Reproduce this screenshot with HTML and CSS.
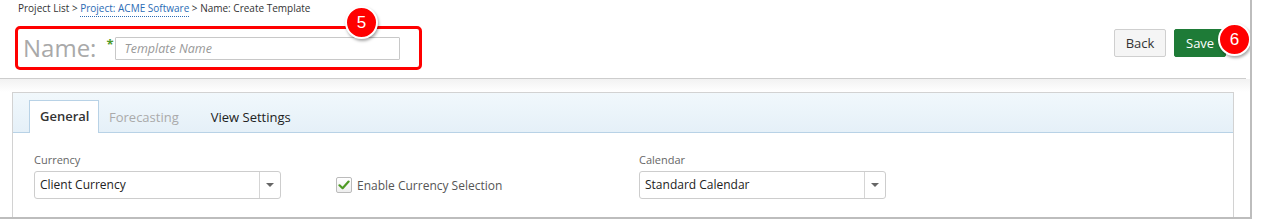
FILE: index.html
```html
<!DOCTYPE html>
<html>
<head>
<meta charset="utf-8">
<link rel="stylesheet" href="styles.css">
</head>
<body>
<div class="frame">
  <header class="top">
    <div class="crumbs">Project List &gt; <a class="crumb-link">Project: ACME Software</a> &gt; Name: Create Template</div>
    <div class="titlebar">
      <div class="name-box">
        <span class="name-label">Name:</span>
        <span class="req">*</span>
        <input class="name-input" type="text" placeholder="Template Name">
        <span class="badge badge-5">5</span>
      </div>
      <div class="actions">
        <button class="btn btn-back">Back</button>
        <button class="btn btn-save">Save<span class="badge badge-6">6</span></button>
      </div>
    </div>
  </header>
  <div class="content">
    <section class="panel">
      <nav class="tabs">
        <span class="tab tab-active">General</span>
        <span class="tab tab-disabled">Forecasting</span>
        <span class="tab tab-view">View Settings</span>
      </nav>
      <div class="panel-body">
        <div class="field">
          <div class="field-label">Currency</div>
          <div class="select">
            <span class="select-text">Client Currency</span>
            <span class="select-arrow"><span class="caret"></span></span>
          </div>
        </div>
        <label class="check">
          <span class="check-box">
            <svg width="12" height="12" viewBox="0 0 12 12"><path d="M1.5 6.3 L4.6 9.2 L10.6 2.6" fill="none" stroke="#4e9a24" stroke-width="2.2" stroke-linecap="round" stroke-linejoin="round"/></svg>
          </span>
          <span class="check-text">Enable Currency Selection</span>
        </label>
        <div class="field">
          <div class="field-label">Calendar</div>
          <div class="select">
            <span class="select-text">Standard Calendar</span>
            <span class="select-arrow"><span class="caret"></span></span>
          </div>
        </div>
      </div>
    </section>
  </div>
</div>
</body>
</html>
```
FILE: styles.css
```css
* { box-sizing: border-box; }
body {
  margin: 0;
  font-family: "Open Sans", "Liberation Sans", sans-serif;
  color: #333;
  background: #fff;
}
.frame {
  width: 1252px;
  height: 219px;
  border-right: 2px solid #bdbdbd;
  border-bottom: 2px solid #bdbdbd;
  overflow: hidden;
}
.top {
  height: 79px;
  margin-right: 4px;
  border-bottom: 1px solid #cdcdcd;
}
.crumbs {
  height: 26px;
  padding: 1px 0 0 18px;
  font-size: 10px;
  line-height: 14px;
  color: #333;
}
.crumb-link {
  color: #2b6cb5;
  text-decoration: none;
  border-bottom: 1px dotted #2b6cb5;
  padding-bottom: 1px;
}
.titlebar {
  display: flex;
  justify-content: space-between;
  align-items: flex-start;
  padding: 0 20px 0 15px;
}
.name-box {
  position: relative;
  width: 407px;
  height: 44px;
  border: 3px solid #f00;
  border-radius: 5px;
  display: flex;
  align-items: center;
  padding-left: 5px;
}
.name-label {
  font-size: 24px;
  line-height: 1;
  color: #a9a9a9;
}
.req {
  align-self: flex-start;
  margin: 9px 0 0 10px;
  font-size: 13px;
  font-weight: 700;
  line-height: 13px;
  color: #4c9a2a;
}
.name-input {
  margin-left: 1px;
  width: 285px;
  height: 23px;
  border: 1px solid #c8c8c8;
  border-radius: 1px;
  padding: 0 9px;
  font-family: "Open Sans", "Liberation Sans", sans-serif;
  font-style: italic;
  font-size: 12.5px;
  color: #333;
  outline: none;
}
.name-input::placeholder { color: #999; }
.badge {
  position: absolute;
  width: 33px;
  height: 33px;
  border-radius: 50%;
  background: #f00;
  border: 2px solid #fff;
  box-shadow: 1px 2px 3px rgba(0, 0, 0, 0.35);
  color: #fff;
  font-family: "Liberation Sans", Arial, sans-serif;
  font-size: 17px;
  display: flex;
  align-items: center;
  justify-content: center;
}
.badge-5 { left: 327px; top: -23px; }
.badge-6 { left: 43px; top: -7px; }
.actions {
  display: flex;
  gap: 8px;
  margin-top: 3px;
}
.btn {
  height: 28px;
  width: 52px;
  padding: 0;
  font-family: "Open Sans", "Liberation Sans", sans-serif;
  font-size: 13px;
  border-radius: 2px;
  border: 1px solid #cfcfcf;
  background: #f5f5f5;
  color: #333;
}
.btn-save {
  position: relative;
  background: #1e7b37;
  border-color: #1e7b37;
  color: #fff;
  text-align: left;
  padding-left: 11px;
}
.content {
  height: 138px;
  padding: 13px 0 0 12px;
  background: linear-gradient(#f2f2f2, #fff 13px);
}
.panel {
  width: 1222px;
  height: 130px;
  border: 1px solid #d2d2d2;
  border-bottom: none;
  background: #fff;
}
.tabs {
  height: 40px;
  display: flex;
  align-items: flex-end;
  padding-left: 16px;
  background: linear-gradient(#f1f8fc, #e5f0f8);
  border-bottom: 1px solid #b8d2e6;
}
.tab {
  height: 32px;
  line-height: 31px;
  padding: 0 10px;
  font-size: 13px;
  margin-bottom: -1px;
  border: 1px solid transparent;
  border-bottom: none;
}
.tab-active {
  width: 70px;
  height: 33px;
  font-weight: 600;
  color: #333;
  background: #fff;
  border-color: #b8d2e6;
}
.tab-disabled {
  color: #aaa;
  padding-left: 9px;
  padding-right: 20px;
}
.tab-view {
  color: #222;
}
.panel-body {
  display: flex;
  align-items: flex-end;
  padding: 19px 0 0 21px;
}
.field { width: 247px; }
.field-label {
  font-size: 11px;
  line-height: 15px;
  color: #666;
  margin-bottom: 4px;
}
.select {
  display: flex;
  height: 28px;
  border: 1px solid #cdcdcd;
  border-radius: 3px;
}
.select-text {
  flex: 1;
  padding-left: 5px;
  font-size: 12px;
  line-height: 26px;
  color: #222;
}
.select-arrow {
  width: 21px;
  border-left: 1px solid #d5d5d5;
  display: flex;
  align-items: center;
  justify-content: center;
}
.caret {
  width: 0;
  height: 0;
  border-left: 4px solid transparent;
  border-right: 4px solid transparent;
  border-top: 4px solid #666;
}
.check {
  width: 303px;
  margin-left: 55px;
  height: 28px;
  display: flex;
  align-items: center;
}
.check-box {
  width: 16px;
  height: 16px;
  border: 1px solid #bbb;
  border-radius: 2px;
  background: linear-gradient(#fff, #eee);
  display: flex;
  align-items: center;
  justify-content: center;
}
.check-text {
  margin-left: 5px;
  font-size: 12px;
  color: #555;
}
```
